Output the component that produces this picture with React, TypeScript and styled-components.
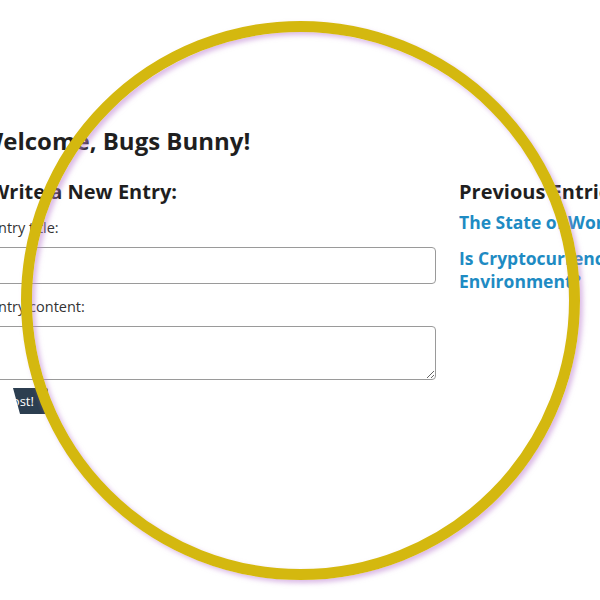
import React from 'react';
import styled, { createGlobalStyle } from 'styled-components';

const GlobalStyle = createGlobalStyle`
    html, body {
        margin: 0;
        padding: 0;
        background: #ffffff;
        overflow: hidden;
    }
    body {
        font-family: "Open Sans", "Liberation Sans", sans-serif;
        color: #222222;
    }
`;

const Page = styled.div`
    width: 600px;
    height: 600px;
    overflow: hidden;
    position: relative;
`;

const Container = styled.main`
    margin-left: -10px;
    padding-top: 125px;
    width: 760px;
`;

const Welcome = styled.h1`
    margin: 0 0 21px -10px;
    font-size: 24px;
    font-weight: 700;
    line-height: 32px;
    color: #1f1f1f;
    white-space: nowrap;
`;

const Columns = styled.div`
    display: grid;
    grid-template-columns: 446px 280px;
    gap: 23px;
`;

const SectionTitle = styled.h2`
    margin: 0 0 12px;
    font-size: 20px;
    font-weight: 700;
    line-height: 28px;
    color: #1f1f1f;
    white-space: nowrap;
`;

const FormGroup = styled.div`
    margin-bottom: 13px;

    label {
        display: block;
        margin-bottom: 9px;
        font-size: 14.5px;
        font-weight: 400;
        line-height: 20px;
        color: #333333;
    }
`;

const Input = styled.input`
    display: block;
    box-sizing: border-box;
    width: 100%;
    height: 37px;
    border: 1px solid #9a9a9a;
    border-radius: 4px;
    font-size: 14px;
`;

const Textarea = styled.textarea`
    display: block;
    box-sizing: border-box;
    width: 100%;
    height: 54px;
    border: 1px solid #9a9a9a;
    border-radius: 4px;
    font-size: 14px;
`;

const PostButton = styled.button`
    display: block;
    margin-top: -5px;
    height: 26px;
    padding: 0 14px;
    border: none;
    border-radius: 2px;
    background: #2c3e50;
    color: #ffffff;
    font-family: "Open Sans", sans-serif;
    font-size: 13px;
    clip-path: polygon(23px 0, 100% 0, 100% 100%, 30px 100%);
`;

const EntryList = styled.ul`
    list-style: none;
    margin: -7px 0 0;
    padding: 0;

    li {
        margin-bottom: 13px;
    }
`;

const EntryLink = styled.a`
    display: block;
    font-size: 17.5px;
    font-weight: 700;
    line-height: 23px;
    color: #1e8bc3;
    text-decoration: none;
`;

const Lens = styled.div`
    position: absolute;
    left: 21px;
    top: 21px;
    width: 559px;
    height: 559px;
    box-sizing: border-box;
    border: 11px solid #d4b80f;
    border-radius: 50%;
    box-shadow: 3px 3px 5px rgba(190, 130, 210, 0.55), inset 3px 3px 5px rgba(190, 130, 210, 0.55);
    pointer-events: none;
`;

export default function App() {
    return (
        <Page>
            <GlobalStyle />
            <Container>
                <Welcome>Welcome, Bugs Bunny!</Welcome>
                <Columns>
                    <section>
                        <SectionTitle>Write a New Entry:</SectionTitle>
                        <FormGroup>
                            <label htmlFor="entry-title">Entry title:</label>
                            <Input id="entry-title" type="text" />
                        </FormGroup>
                        <FormGroup>
                            <label htmlFor="entry-content">Entry content:</label>
                            <Textarea id="entry-content" />
                        </FormGroup>
                        <PostButton type="button">Post!</PostButton>
                    </section>
                    <section>
                        <SectionTitle>Previous Entries</SectionTitle>
                        <EntryList>
                            <li>
                                <EntryLink href="#">The State of World Affairs</EntryLink>
                            </li>
                            <li>
                                <EntryLink href="#">Is Cryptocurrency Bad for the Environment?</EntryLink>
                            </li>
                        </EntryList>
                    </section>
                </Columns>
            </Container>
            <Lens />
        </Page>
    );
}
